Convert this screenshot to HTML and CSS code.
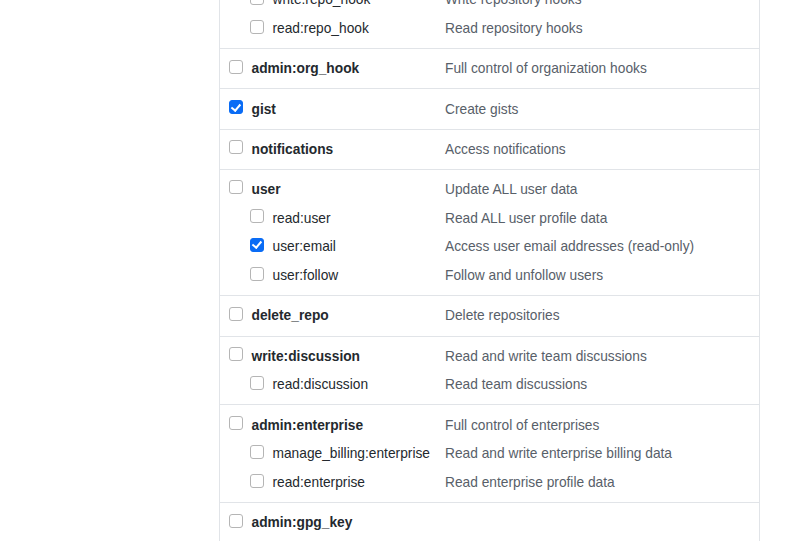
FILE: index.html
```html
<!DOCTYPE html>
<html>
<head>
<meta charset="utf-8">
<link rel="stylesheet" href="styles.css">
</head>
<body>
<div class="scopes">
  <div class="group">
    <div class="line"><label class="name main"><input type="checkbox">admin:repo_hook</label><span class="desc">Full control of repository hooks</span></div>
    <div class="line"><label class="name sub"><input type="checkbox">write:repo_hook</label><span class="desc">Write repository hooks</span></div>
    <div class="line"><label class="name sub"><input type="checkbox">read:repo_hook</label><span class="desc">Read repository hooks</span></div>
  </div>
  <div class="group">
    <div class="line"><label class="name main"><input type="checkbox">admin:org_hook</label><span class="desc">Full control of organization hooks</span></div>
  </div>
  <div class="group">
    <div class="line"><label class="name main"><input type="checkbox" checked>gist</label><span class="desc">Create gists</span></div>
  </div>
  <div class="group">
    <div class="line"><label class="name main"><input type="checkbox">notifications</label><span class="desc">Access notifications</span></div>
  </div>
  <div class="group">
    <div class="line"><label class="name main"><input type="checkbox">user</label><span class="desc">Update ALL user data</span></div>
    <div class="line"><label class="name sub"><input type="checkbox">read:user</label><span class="desc">Read ALL user profile data</span></div>
    <div class="line"><label class="name sub"><input type="checkbox" checked>user:email</label><span class="desc">Access user email addresses (read-only)</span></div>
    <div class="line"><label class="name sub"><input type="checkbox">user:follow</label><span class="desc">Follow and unfollow users</span></div>
  </div>
  <div class="group">
    <div class="line"><label class="name main"><input type="checkbox">delete_repo</label><span class="desc">Delete repositories</span></div>
  </div>
  <div class="group">
    <div class="line"><label class="name main"><input type="checkbox">write:discussion</label><span class="desc">Read and write team discussions</span></div>
    <div class="line"><label class="name sub"><input type="checkbox">read:discussion</label><span class="desc">Read team discussions</span></div>
  </div>
  <div class="group">
    <div class="line"><label class="name main"><input type="checkbox">admin:enterprise</label><span class="desc">Full control of enterprises</span></div>
    <div class="line"><label class="name sub"><input type="checkbox">manage_billing:enterprise</label><span class="desc">Read and write enterprise billing data</span></div>
    <div class="line"><label class="name sub"><input type="checkbox">read:enterprise</label><span class="desc">Read enterprise profile data</span></div>
  </div>
  <div class="group">
    <div class="line"><label class="name main"><input type="checkbox">admin:gpg_key</label><span class="desc"></span></div>
    <div class="line"><label class="name sub"><input type="checkbox">write:gpg_key</label><span class="desc">Write public user GPG keys</span></div>
    <div class="line"><label class="name sub"><input type="checkbox">read:gpg_key</label><span class="desc">Read public user GPG keys</span></div>
  </div>
</div>
</body>
</html>
```

FILE: styles.css
```css
html, body {
  margin: 0;
  padding: 0;
  background: #ffffff;
  overflow: hidden;
}

body {
  font-family: "Liberation Sans", Arial, sans-serif;
  font-size: 13.75px;
  color: #24292e;
}

.scopes {
  box-sizing: border-box;
  width: 541px;
  margin: -49.5px 0 0 219px;
  border-left: 1px solid #e1e4e8;
  border-right: 1px solid #e1e4e8;
}

.group {
  border-top: 1px solid #e1e4e8;
  padding: 5.2px 0 5.2px 9px;
}

.line {
  display: grid;
  grid-template-columns: 216px 1fr;
  align-items: center;
  height: 28.8px;
}

.name {
  display: flex;
  align-items: center;
  white-space: nowrap;
}

.name input {
  -webkit-appearance: none;
  appearance: none;
  box-sizing: border-box;
  margin: 0 9px 0 -0.5px;
  width: 14px;
  height: 14px;
  border: 1px solid #b5b5b5;
  border-radius: 3px;
  background: #ffffff;
  position: relative;
  top: -2px;
}

.name input:checked {
  background: #0a6cf5;
  border-color: #0a6cf5;
}

.name input:checked::after {
  content: "";
  position: absolute;
  left: 3.5px;
  top: 0.5px;
  width: 3.5px;
  height: 7px;
  border: solid #ffffff;
  border-width: 0 2px 2px 0;
  transform: rotate(40deg);
}

.main {
  font-weight: bold;
}

.sub {
  padding-left: 21px;
}

.desc {
  color: #586069;
}
```
